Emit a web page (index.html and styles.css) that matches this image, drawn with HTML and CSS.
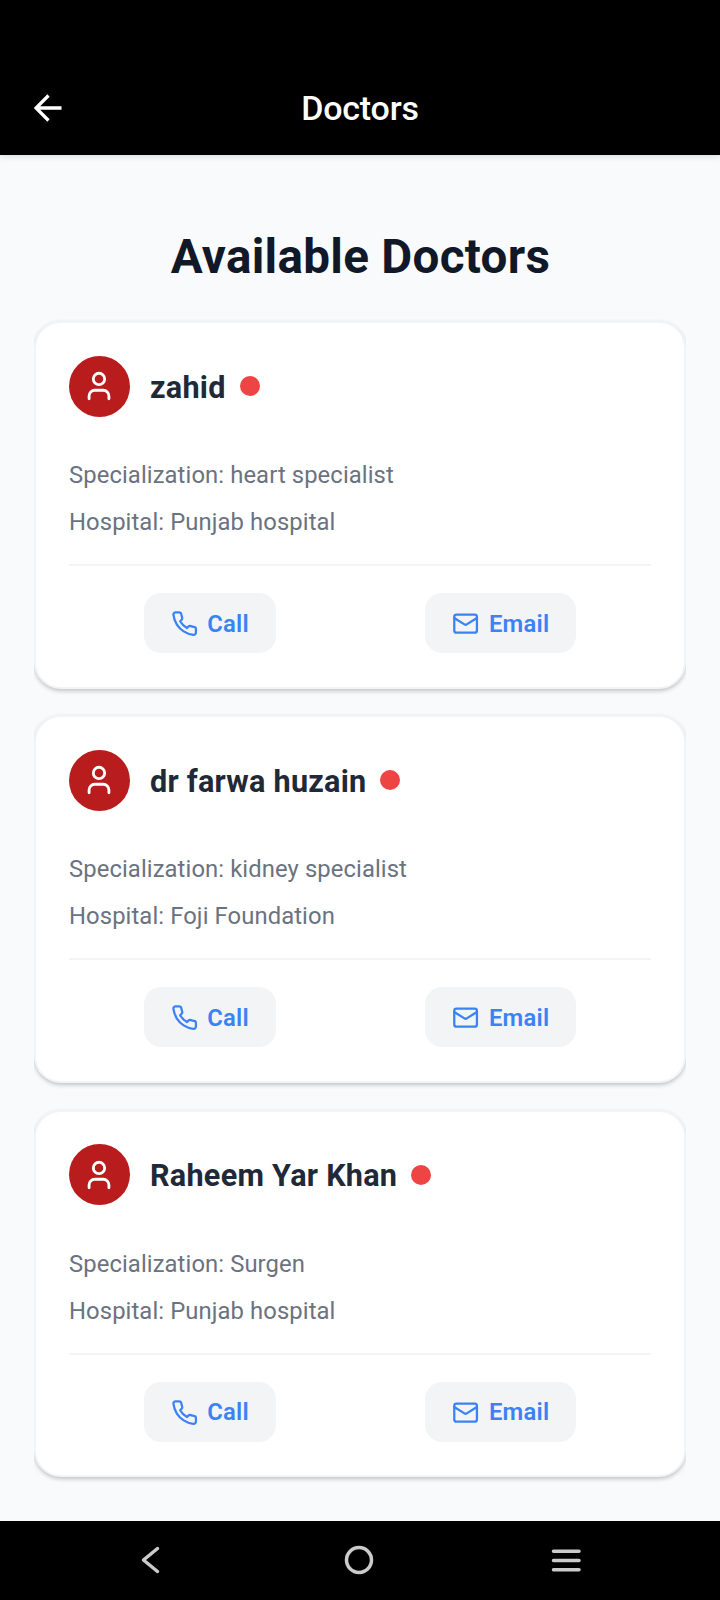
FILE: index.html
```
<!DOCTYPE html>
<html lang="en">
<head>
<meta charset="utf-8">
<title>Doctors</title>
<link rel="stylesheet" href="styles.css">
</head>
<body>
<svg class="defs" aria-hidden="true">
  <symbol id="user" viewBox="0 0 24 24"><path d="M19 21v-2a4 4 0 0 0-4-4H9a4 4 0 0 0-4 4v2"/><circle cx="12" cy="7" r="4"/></symbol>
  <symbol id="phone" viewBox="0 0 24 24"><path d="M22 16.92v3a2 2 0 0 1-2.18 2 19.79 19.79 0 0 1-8.63-3.07 19.5 19.5 0 0 1-6-6 19.79 19.79 0 0 1-3.07-8.67A2 2 0 0 1 4.11 2h3a2 2 0 0 1 2 1.72 12.84 12.84 0 0 0 .7 2.81 2 2 0 0 1-.45 2.11L8.09 9.91a16 16 0 0 0 6 6l1.27-1.27a2 2 0 0 1 2.11-.45 12.84 12.84 0 0 0 2.81.7A2 2 0 0 1 22 16.92z"/></symbol>
  <symbol id="mail" viewBox="0 0 24 24"><rect width="20" height="16" x="2" y="4" rx="2"/><path d="m22 7-8.97 5.7a1.94 1.94 0 0 1-2.06 0L2 7"/></symbol>
</svg>
<div class="screen">
  <header class="header">
    <svg class="back" viewBox="0 0 28 28"><path d="M27.500 14H2M14.500 1.500 2 14l12.500 12.500"/></svg>
    <div class="header-title">Doctors</div>
  </header>
  <main class="main">
    <h1 class="title">Available Doctors</h1>
    <div class="list">
      <article class="card">
        <div class="person"><span class="avatar"><svg><use href="#user"/></svg></span><h2 class="name">zahid</h2><span class="dot"></span></div>
        <p class="detail">Specialization: heart specialist</p>
        <p class="detail">Hospital: Punjab hospital</p>
        <div class="actions">
          <a class="button"><svg><use href="#phone"/></svg>Call</a>
          <a class="button"><svg><use href="#mail"/></svg>Email</a>
        </div>
      </article>
      <article class="card">
        <div class="person"><span class="avatar"><svg><use href="#user"/></svg></span><h2 class="name">dr farwa huzain</h2><span class="dot"></span></div>
        <p class="detail">Specialization: kidney specialist</p>
        <p class="detail">Hospital: Foji Foundation</p>
        <div class="actions">
          <a class="button"><svg><use href="#phone"/></svg>Call</a>
          <a class="button"><svg><use href="#mail"/></svg>Email</a>
        </div>
      </article>
      <article class="card">
        <div class="person"><span class="avatar"><svg><use href="#user"/></svg></span><h2 class="name">Raheem Yar Khan</h2><span class="dot"></span></div>
        <p class="detail">Specialization: Surgen</p>
        <p class="detail">Hospital: Punjab hospital</p>
        <div class="actions">
          <a class="button"><svg><use href="#phone"/></svg>Call</a>
          <a class="button"><svg><use href="#mail"/></svg>Email</a>
        </div>
      </article>
    </div>
  </main>
  <nav class="navbar">
    <svg viewBox="0 0 32 32"><path d="M22.500 4.500 8.500 16l14 11.500"/></svg>
    <svg viewBox="0 0 32 32"><circle cx="16" cy="16" r="12.500"/></svg>
    <svg viewBox="0 0 32 32"><path d="M3.500 7.300h25.500M3.500 16.500h25.500M3.500 25.800h25.500"/></svg>
  </nav>
</div>
</body>
</html>
```
FILE: styles.css
```
* { box-sizing: border-box; }
body { margin: 0; font-family: Roboto, sans-serif; background: #f9fafb; }
svg { display: block; flex: none; fill: none; stroke: currentColor; stroke-width: 2; stroke-linecap: round; stroke-linejoin: round; }
.defs { display: none; }
.screen { display: flex; flex-direction: column; width: 720px; height: 1600px; overflow: hidden; background: #f9fafc; }
.header {
  display: grid; grid-template-columns: 1fr auto 1fr; align-items: center;
  height: 155px; padding: 60px 34px 0; background: #000; color: #fff;
  box-shadow: 0 1px 7px rgba(0, 0, 0, .15);
}
.back { width: 28px; height: 28px; stroke-width: 3.300; stroke-linecap: butt; stroke-linejoin: miter; }
.header-title { font-size: 34px; font-weight: 500; line-height: 40px; letter-spacing: -.2px; }
.main { flex: 1; padding: 69px 34px 0; }
.title { margin: 0 0 31px; padding-left: 1px; font-size: 47.600px; line-height: 66px; font-weight: 700; letter-spacing: .3px; text-align: center; color: #111827; }
.list { display: grid; gap: 26.900px; clip-path: inset(-20px 0); }
.card {
  height: 367.500px; padding: 33px; border: 2px solid #f3f4f6; border-radius: 27px; background: #fff;
  box-shadow: 0 2px 4px rgba(0, 0, 0, .22);
}
.person { display: flex; align-items: center; height: 60px; margin-bottom: 39px; }
.avatar { display: grid; place-items: center; width: 61px; height: 61px; border-radius: 50%; background: #b91c1c; color: #fff; }
.avatar svg { width: 34px; height: 34px; margin-right: 1px; }
.name { margin: 0 14px 0 20px; padding-top: 3px; font-size: 30.600px; line-height: 36px; font-weight: 700; letter-spacing: .25px; color: #1f2937; }
.dot { width: 20px; height: 20px; border-radius: 50%; background: #ef4444; }
.detail { margin: 0 0 7px; font-size: 23.800px; line-height: 40px; letter-spacing: .1px; color: #6b7280; }
.actions { display: flex; justify-content: space-around; margin-top: 22px; padding-top: 27px; border-top: 2px solid #f3f4f6; }
.button {
  display: flex; align-items: center; gap: 9.500px; height: 60px; padding: 1px 27px 0; border-radius: 17px;
  background: #f3f4f6; color: #3b82f6; font-size: 23.800px; font-weight: 600; letter-spacing: .25px;
}
.button svg { width: 27.200px; height: 27.200px; }
.navbar { display: flex; justify-content: space-between; align-items: center; height: 79px; padding: 0 138px 1px 135px; background: #000; color: #cbcbcb; }
.navbar svg { width: 32px; height: 32px; stroke-width: 3.500; }
```
